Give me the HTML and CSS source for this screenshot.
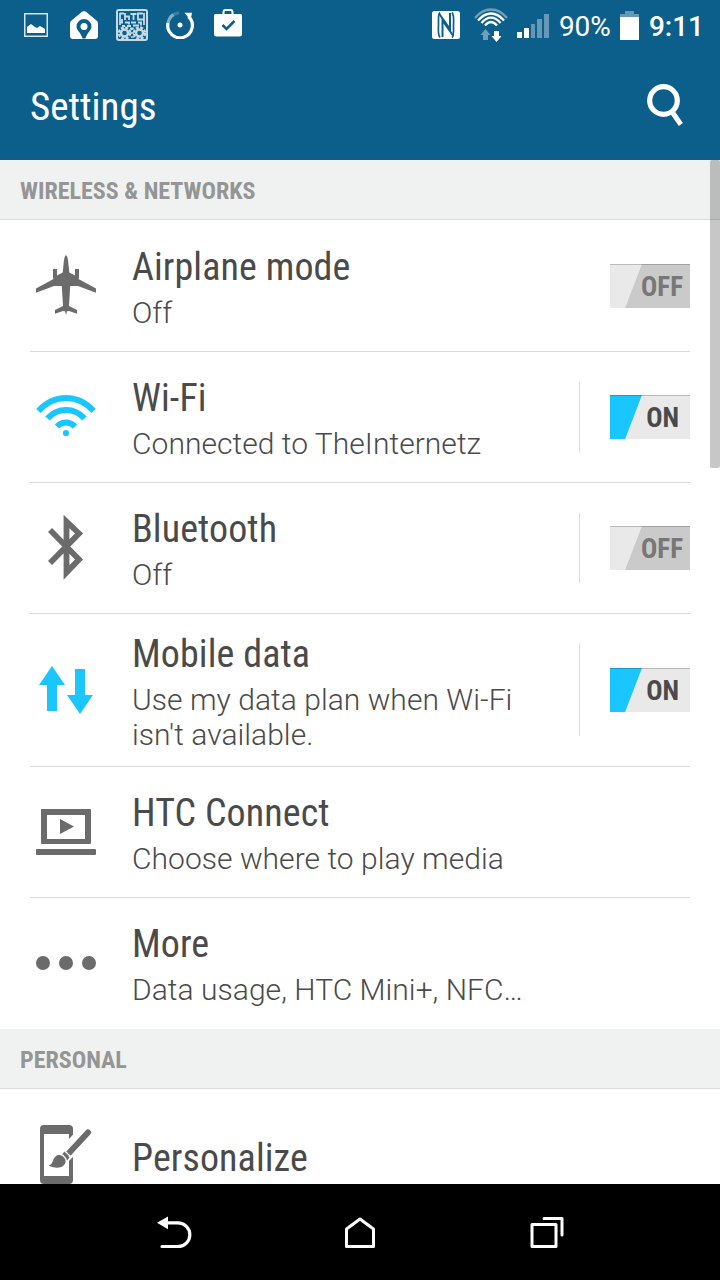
FILE: index.html
```
<!DOCTYPE html>
<html lang="en">
<head>
    <meta charset="UTF-8">
    <meta name="viewport" content="width=device-width, initial-scale=1.0">
    <title>Settings</title>
    <link rel="stylesheet" href="styles.css">
</head>
<body>
    <div class="status-bar">
        <div class="notifications">
            <svg width="24" height="24" viewBox="0 0 24 24"><rect x="0.75" y="0.75" width="22.5" height="22.5" fill="none" stroke="#d5e4ec" stroke-width="1.5"/><path d="M3 20v-6l4-3 4 3 2 1 3-2 5 3v4z" fill="#fff"/></svg>
            <svg width="28" height="28" viewBox="0 0 28 28"><path fill="#fff" fill-rule="evenodd" d="M14 0l2 .8 10.5 8.7q1.500 1.200 1.500 3V25q0 3-3 3H3q-3 0-3-3V12.500q0-1.800 1.500-3L12 .8zM14 8a7.500 7.500 0 0 0-7.500 7.500c0 4 4.500 6 6 12h3c1.500-6 6-8 6-12A7.500 7.500 0 0 0 14 8z"/><circle cx="14" cy="15.500" r="3.500" fill="#fff"/></svg>
            <svg width="32" height="32" viewBox="0 0 32 32" fill="none" stroke="#c6dae5">
                <rect x="1" y="1" width="30" height="30" rx="2" stroke-width="2"/>
                <path stroke-width="1.800" d="M4 4.500h4M4 4v12M9 4v7M9 7.500h4V11M14.500 5h6M17.500 5v6M27 4.500h-5v6h6M28 4v12M4 13.500h3M9 13.500h4v2M15 13.500h5M22 13.500h3v3M6 17h3M11 17h4M17 16.500h6M14 19.500h3M6 10v3"/>
                <circle cx="8.500" cy="24" r="5.600" stroke-width="2.400" stroke-dasharray="3 1.400"/>
                <circle cx="8.500" cy="24" r="3.500" stroke-width="2.400"/>
                <circle cx="23.500" cy="24" r="5.600" stroke-width="2.400" stroke-dasharray="3 1.400"/>
                <circle cx="23.500" cy="24" r="3.500" stroke-width="2.400"/>
                <path stroke-width="1.500" d="M14 24h4M15 21l3-2M15 28h3"/>
            </svg>
            <svg width="28" height="28" viewBox="0 0 28 28" fill="none" stroke="#fff" stroke-width="3.200"><path d="M22.500 5.500A12.300 12.300 0 1 1 2 12"/><path d="M2 12Q3.500 6 7.500 3.700" opacity=".5"/><path d="M7.500 3.700Q10 2.200 13 1.800" opacity=".2"/><path d="M18.500 1.800h7.500l-1.500 7.500z" fill="#fff" stroke="none"/><circle cx="14" cy="14" r="2.500" fill="#fff" stroke="none"/></svg>
            <svg width="28" height="28" viewBox="0 0 28 28"><path d="M9.500 6V3q0-2 2-2h5q2 0 2 2v3" fill="none" stroke="#fff" stroke-width="2"/><path d="M1.500 5h25q1.500 0 1.500 1.500V25q0 2.500-2.500 2.500h-23Q0 27.500 0 25V6.500Q0 5 1.500 5z" fill="#fff"/><path d="M8.500 16l4 4 8-8" fill="none" stroke="#0d5f8b" stroke-width="2.600"/></svg>
        </div>
        <div class="system">
            <svg class="nfc" width="28" height="28" viewBox="0 0 28 28"><rect width="28" height="28" rx="2.500" fill="#fff"/><path d="M8 1.500C6 3 6.500 7 6.500 13s-1 10 1.500 13.500M20 26.500c2-1.500 1.500-5.500 1.500-11.500s1-10-1.500-13.500" fill="none" stroke="#0d5f8b" stroke-width="1.700"/><path d="M10.500 26V9.500L21 24.500M7 2.500L18 18V2" fill="none" stroke="#0d5f8b" stroke-width="2"/></svg>
            <svg class="wifi-status" width="34" height="34" viewBox="0 0 34 34" fill="none" stroke="#fff" stroke-width="2.300">
                <path d="M1 10Q8 1.500 17 1.500T33 10" stroke="#6f9fb9"/>
                <path d="M4 12.500Q10 5.500 17 5.500T30 12.500M7.500 15Q12 9.700 17 9.700T26.500 15M11 17.500Q14 14 17 14T23 17.500"/>
                <path d="M11.500 21l5 6H14v5H9v-5H6.500z" fill="#6f9fb9" stroke="none"/>
                <path d="M22.500 34l-5-6H20v-5h5v5h2.500z" fill="#fff" stroke="none"/>
            </svg>
            <svg class="signal" width="32" height="24" viewBox="0 0 32 24"><path d="M0 18h5v6H0zM7 14h5v10H7z" fill="#fff"/><path d="M14 10h4v14h-4zM20 5h5v19h-5zM27 0h5v24h-5z" fill="#6799b6"/></svg>
            <span class="percent">90%</span>
            <svg class="battery" width="19" height="29" viewBox="0 0 19 29"><path d="M5 0h9v3h5v3H0V3h5z" fill="#6799b6"/><path d="M0 6h19v23H0z" fill="#fff"/></svg>
            <span class="clock">9:11</span>
        </div>
    </div>

    <div class="app-bar">
        <h1>Settings</h1>
        <svg width="40" height="46" viewBox="0 0 40 46" fill="none" stroke="#fff"><circle cx="17.500" cy="17.500" r="13.800" stroke-width="5.200"/><path d="M25.500 28l9.300 13.500" stroke-width="5"/></svg>
    </div>

    <div class="list">
        <h2>WIRELESS &amp; NETWORKS</h2>
        <div class="row">
            <div class="icon"><svg width="60" height="60" viewBox="0 0 60 60"><path fill="#6b6b6b" d="M30 0q1.500 1 2 5l1.300 12.500 5.700 3V14h4v9l-.5 1L60 33.500v4.200L42 31h-7.800L33 51l8 4v3.700l-8-2.700-2 .3-1 3.700-1-3.700-2-.3-8 2.700V55l8-4-1.200-20H18L0 37.700v-4.200L17.500 24l-.5-1v-9h4v6.500l5.700-3L28 5q.5-4 2-5z"/></svg></div>
            <div class="text">
                <div class="title">Airplane mode</div>
                <div class="summary">Off</div>
            </div>
            <div class="switch">OFF</div>
        </div>
        <div class="row">
            <div class="icon"><svg width="60" height="42" viewBox="0 0 60 42" fill="none" stroke="#1ac6ff" stroke-width="6"><path d="M2.500 16Q14 3 30 3T57.500 16M11.500 23.500Q19 15 30 15T48.500 23.500M21 31.500Q25 27.500 30 27.500T39 31.500"/><circle cx="30" cy="38" r="3.100" fill="#1ac6ff" stroke="none"/></svg></div>
            <div class="text">
                <div class="title">Wi-Fi</div>
                <div class="summary">Connected to TheInternetz</div>
            </div>
            <div class="divider"></div>
            <div class="switch on">ON</div>
        </div>
        <div class="row">
            <div class="icon"><svg width="36" height="66" viewBox="0 0 36 66" fill="none" stroke="#6b6b6b" stroke-width="5.800"><path d="M2 16l29 29.500-12.500 13V7.500L31 19.500 2 49"/></svg></div>
            <div class="text">
                <div class="title">Bluetooth</div>
                <div class="summary">Off</div>
            </div>
            <div class="divider"></div>
            <div class="switch">OFF</div>
        </div>
        <div class="row tall">
            <div class="icon"><svg width="54" height="48" viewBox="0 0 54 48" fill="#1ac6ff"><path d="M13 0l13 19h-8v26H8V19H0zM36 3h10v26h8L41 48 28 29h8z"/></svg></div>
            <div class="text">
                <div class="title">Mobile data</div>
                <div class="summary">Use my data plan when Wi-Fi isn't available.</div>
            </div>
            <div class="divider"></div>
            <div class="switch on">ON</div>
        </div>
        <div class="row">
            <div class="icon laptop"><svg width="60" height="46" viewBox="0 0 60 46" fill="#6b6b6b"><path fill-rule="evenodd" d="M6 0h48q1 0 1 1v33q0 1-1 1H6q-1 0-1-1V1q0-1 1-1zm5 6v24h38V6z"/><path d="M24 10l14 7.500L24 25z"/><rect y="40" width="60" height="6" rx="1"/></svg></div>
            <div class="text">
                <div class="title">HTC Connect</div>
                <div class="summary">Choose where to play media</div>
            </div>
        </div>
        <div class="row last">
            <div class="icon"><svg width="60" height="14" viewBox="0 0 60 14" fill="#6b6b6b"><circle cx="7" cy="7" r="7"/><circle cx="30" cy="7" r="7"/><circle cx="53" cy="7" r="7"/></svg></div>
            <div class="text">
                <div class="title">More</div>
                <div class="summary">Data usage, HTC Mini+, NFC…</div>
            </div>
        </div>

        <h2>PERSONAL</h2>
        <div class="row single">
            <div class="icon phone"><svg width="52" height="60" viewBox="0 0 52 60"><path fill="#6b6b6b" fill-rule="evenodd" d="M4 0h25q4 0 4 4v51q0 4-4 4H4q-4 0-4-4V4q0-4 4-4zm0 9v42h25V9z"/><path d="M28 23l17-18" stroke="#fff" stroke-width="11"/><path d="M21 36l15-15" stroke="#fff" stroke-width="11"/><path d="M29 28L48 7.500" stroke="#6b6b6b" stroke-width="6" stroke-linecap="round"/><path d="M24.500 26.500l5 6-2.500 3-5-6z" fill="#6b6b6b"/><path d="M8.500 40.500c5-1 3.500-6 7-9 3-2.500 6.500-1.500 8.500 1 2.500 3 2 6-1 8.500-3.500 3-11 1.500-14.500-.5z" fill="#6b6b6b"/><path d="M26 27l5 5M22.500 29.500l4 5" stroke="#fff" stroke-width="1.200"/></svg></div>
            <div class="text">
                <div class="title">Personalize</div>
            </div>
        </div>
        <div class="scrollbar"></div>
    </div>

    <div class="nav-bar">
        <svg width="36" height="34" viewBox="0 0 36 34"><path d="M5 30.500h16a11.800 11.800 0 0 0 0-23.700H9" fill="none" stroke="#fff" stroke-width="3.200" stroke-linecap="round"/><path d="M0 6.800L11 .5v12.800z" fill="#fff"/></svg>
        <svg width="32" height="34" viewBox="0 0 32 34"><path d="M2.500 13L16 3l13.500 10v17.500h-27z" fill="none" stroke="#fff" stroke-width="3" stroke-linejoin="round"/></svg>
        <svg width="34" height="34" viewBox="0 0 34 34" fill="none" stroke="#fff" stroke-width="3" stroke-linejoin="round" stroke-linecap="round"><path d="M2 8.500h24v22H2zM14 2.500h18v16.500"/></svg>
    </div>
</body>
</html>
```
FILE: styles.css
```
* { box-sizing: border-box; }
body { margin: 0; width: 720px; height: 1280px; display: flex; flex-direction: column; overflow: hidden; background: #fff; font-family: Roboto, sans-serif; color: #4a4a4a; }
svg { display: block; flex: none; }
h1, h2 { margin: 0; }

.status-bar { height: 50px; display: flex; justify-content: space-between; padding: 0 16px 0 24px; background: #0d5f8b; color: #fff; }
.notifications { display: flex; align-items: center; gap: 20px; }
.notifications svg:first-child { margin-right: 2px; }
.notifications svg:nth-child(3) { margin: 0 -2px; }
.notifications svg:last-child { margin-top: -4px; }
.system { display: flex; align-items: center; font-size: 28px; }
.system span { padding-top: 2px; }
.wifi-status { margin-left: 14px; }
.signal { margin: 2px 10px 0 9px; }
.percent { width: 52px; }
.battery { margin: 0 10px 0 9px; }
.clock { font-weight: 500; }

.app-bar { height: 110px; display: flex; align-items: center; justify-content: space-between; padding: 2px 34px 0 30px; background: #0d5f8b; color: #fff; }
h1 { padding-top: 2px; font-family: "Roboto Condensed", Roboto, sans-serif; font-stretch: 75%; font-weight: 400; font-size: 39px; }

.list { position: relative; flex: 1; overflow: hidden; }
h2 { height: 60px; padding: 2px 20px 0; border-bottom: 1px solid #dadcdb; background: #f0f2f1; color: #959595; font-family: "Roboto Condensed", Roboto, sans-serif; font-stretch: 75%; font-size: 24px; line-height: 58px; }
.row { display: flex; align-items: center; height: 131px; margin: 0 30px; border-top: 1px solid #dadada; }
h2 + .row { border-top-color: transparent; }
.row.tall { height: 153px; }
.row.last { height: 132px; }
.icon { width: 72px; display: flex; justify-content: center; margin-right: 30px; padding-bottom: 2px; }
.tall .icon, .icon.phone, .icon.laptop { padding-bottom: 0; }
.text { flex: 1; padding: 3px 30px 0 0; }
.last .text { padding-top: 1px; }
.single .text { padding-top: 6px; }
.title { font-family: "Roboto Condensed", Roboto, sans-serif; font-stretch: 75%; font-size: 38px; line-height: 45px; letter-spacing: 0.1px; }
.summary { margin-top: 5px; font-size: 30px; line-height: 35px; font-weight: 300; letter-spacing: 0.04px; }
.divider { width: 1px; height: 70px; margin-right: 30px; background: #dadada; }
.tall .divider { height: 92px; }
.switch { width: 80px; height: 44px; padding-right: 7px; border-top: 1px solid rgba(0, 0, 0, 0.2); background: linear-gradient(111deg, #e9e9e9 0 32.5%, #cacaca 33.5% 100%) border-box; color: #777; font-family: "Roboto Condensed", Roboto, sans-serif; font-stretch: 75%; font-size: 27px; font-weight: 700; line-height: 45px; text-align: right; }
.switch.on { padding-right: 11px; background: linear-gradient(111deg, #1ac6ff 0 32.5%, #e9e9e9 33.5% 100%) border-box; color: #4a4a4a; }
.scrollbar { position: absolute; top: 0; right: 0; width: 10px; height: 308px; border-radius: 2px; background: rgba(0, 0, 0, 0.22); }

.nav-bar { height: 96px; display: flex; align-items: center; gap: 152px; padding: 2px 0 0 157px; background: #000; }
.nav-bar svg:nth-child(2) { margin: 0 2px 0 -1px; }
```
